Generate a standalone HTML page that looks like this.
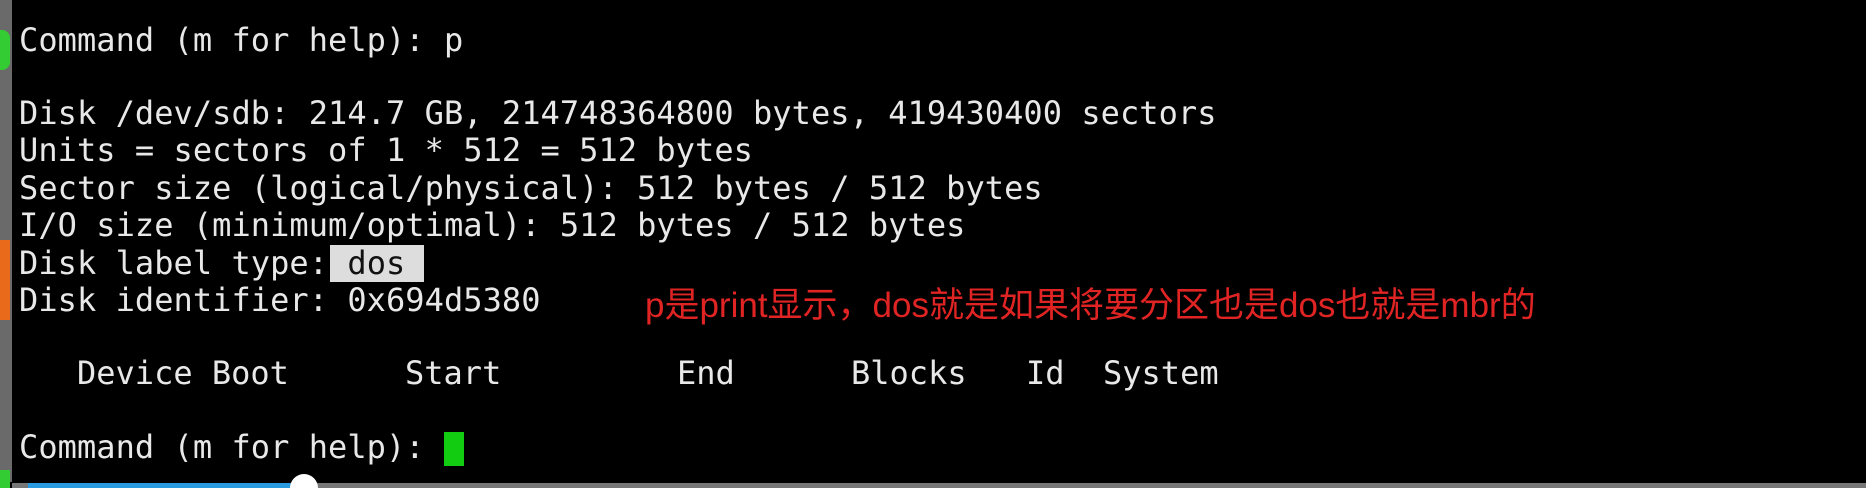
<!DOCTYPE html>
<html><head><meta charset="utf-8"><style>
html,body{margin:0;padding:0;background:#000;width:1866px;height:488px;overflow:hidden;position:relative}
.t{position:absolute;left:19px;font-family:"DejaVu Sans Mono","Liberation Mono",monospace;font-size:32px;letter-spacing:0.05px;color:#e8e8e8;white-space:pre;line-height:38px}
.s{position:absolute;font-family:"DejaVu Sans Mono","Liberation Mono",monospace;font-size:32px;color:#e8e8e8;white-space:pre;line-height:38px;top:354px}
.red{position:absolute;left:645px;top:286px;font-family:"Liberation Sans","Noto Sans CJK SC",sans-serif;font-size:35px;color:#e02424;white-space:pre;line-height:40px}
</style></head><body>
<div style="position:absolute;left:0;top:0;width:12px;height:482px;background:#6a6a6a"></div>
<div style="position:absolute;left:0;top:30px;width:10px;height:40px;background:#3c3;border-radius:0 8px 8px 0"></div>
<div style="position:absolute;left:0;top:240px;width:10px;height:80px;background:#e86a1a"></div>
<div style="position:absolute;left:0;top:470px;width:10px;height:18px;background:#3c3"></div>
<div class="t" style="top:21px">Command (m for help): p</div>
<div class="t" style="top:94px">Disk /dev/sdb: 214.7 GB, 214748364800 bytes, 419430400 sectors</div>
<div class="t" style="top:131px">Units = sectors of 1 * 512 = 512 bytes</div>
<div class="t" style="top:169px">Sector size (logical/physical): 512 bytes / 512 bytes</div>
<div class="t" style="top:206px">I/O size (minimum/optimal): 512 bytes / 512 bytes</div>
<div style="position:absolute;left:330px;top:245px;width:94px;height:37px;background:#ddd"></div>
<div class="t" style="top:244px">Disk label type: <span style="color:#111">dos</span></div>
<div class="t" style="top:281px">Disk identifier: 0x694d5380</div>
<div class="red">p是print显示，dos就是如果将要分区也是dos也就是mbr的</div>
<span class="s" style="left:77px">Device Boot</span>
<span class="s" style="left:405px">Start</span>
<span class="s" style="left:677px">End</span>
<span class="s" style="left:851px">Blocks</span>
<span class="s" style="left:1026px">Id</span>
<span class="s" style="left:1103px">System</span>
<div class="t" style="top:428px">Command (m for help): </div>
<div style="position:absolute;left:444px;top:432px;width:20px;height:34px;background:#1c1"></div>
<div style="position:absolute;left:12px;top:483px;width:1854px;height:5px;background:#777"></div>
<div style="position:absolute;left:28px;top:483px;width:276px;height:5px;background:#2a9be0"></div>
<div style="position:absolute;left:290px;top:474px;width:28px;height:28px;background:#fff;border-radius:50%"></div>
</body></html>
